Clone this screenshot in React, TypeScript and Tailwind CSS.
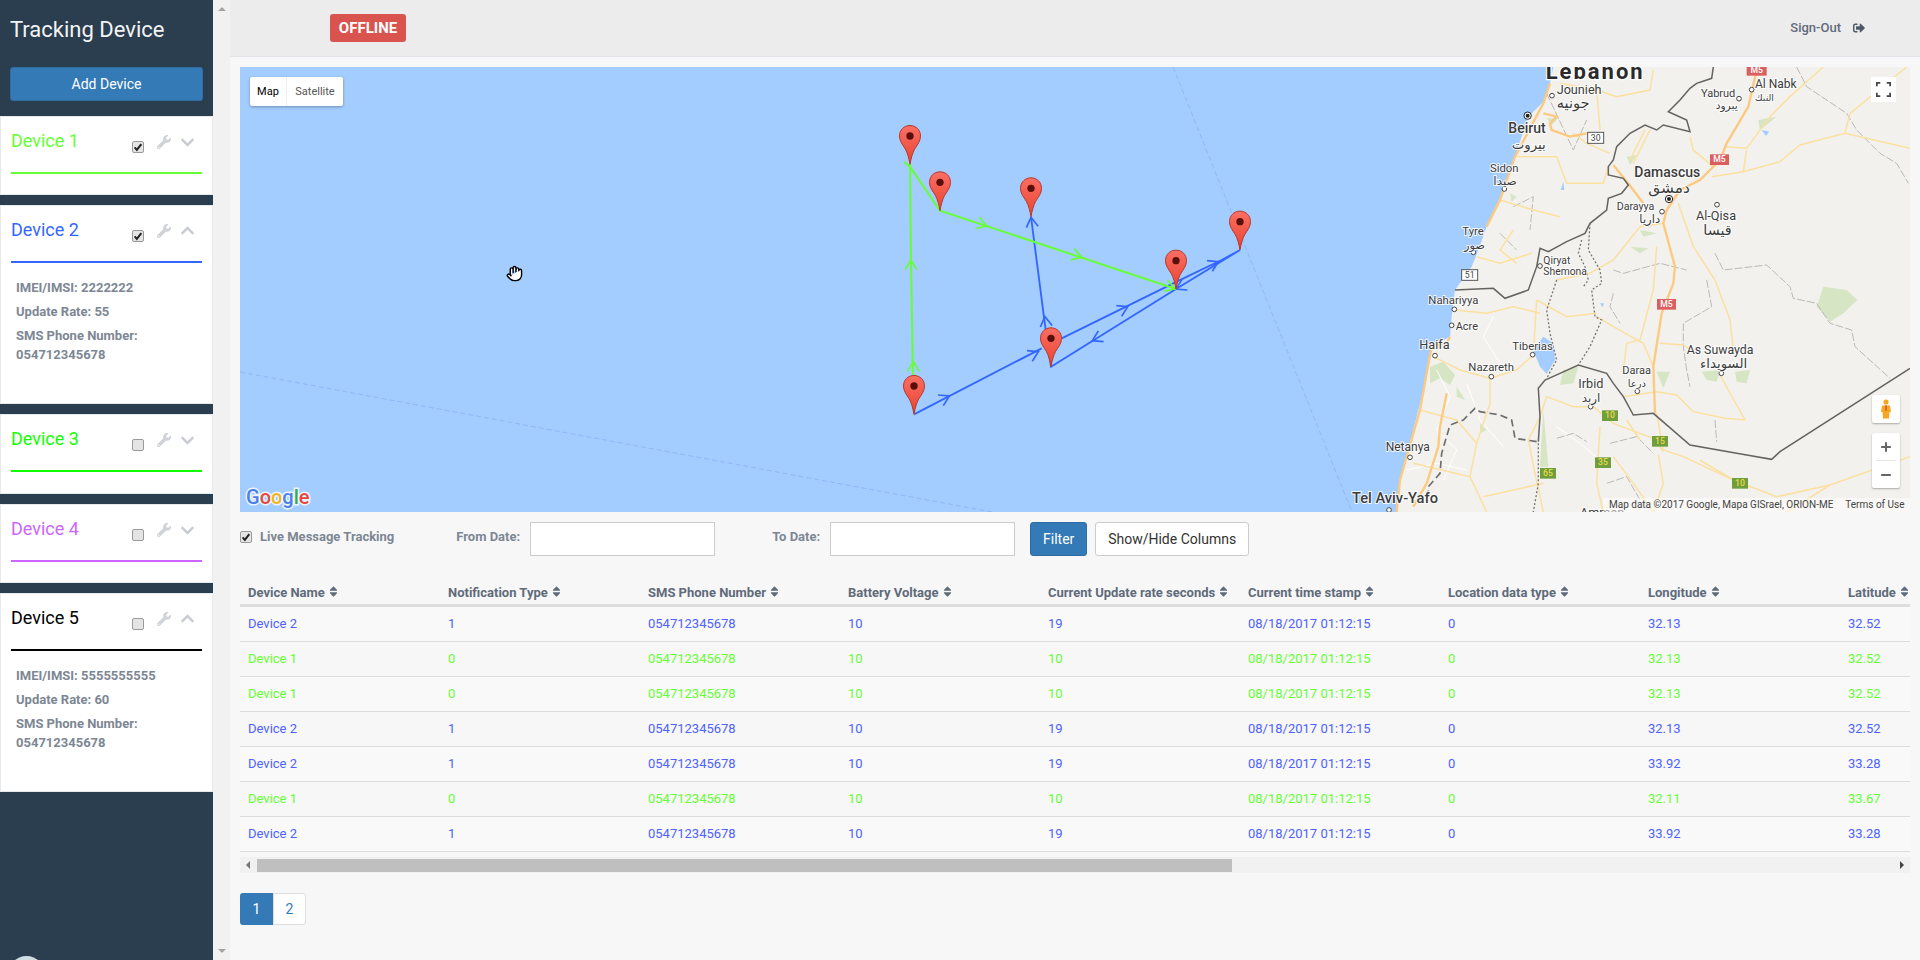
import { Hand, Minus, Plus } from 'lucide-react';
import { FaChevronDown, FaChevronUp, FaSignOutAlt, FaSort, FaWrench } from 'react-icons/fa';

const BLUE = '#3366ff';
const GREEN = '#66ff33';

type Device = { name: string; color: string; checked: boolean; imei?: string; rate?: number };

const devices: Device[] = [
  { name: 'Device 1', color: GREEN, checked: true },
  { name: 'Device 2', color: BLUE, checked: true, imei: '2222222', rate: 55 },
  { name: 'Device 3', color: '#11ff00', checked: false },
  { name: 'Device 4', color: '#cc66ff', checked: false },
  { name: 'Device 5', color: '#000000', checked: false, imei: '5555555555', rate: 60 },
];

const columns = [
  'Device Name',
  'Notification Type',
  'SMS Phone Number',
  'Battery Voltage',
  'Current Update rate seconds',
  'Current time stamp',
  'Location data type',
  'Longitude',
  'Latitude',
];

const rows = [
  ['Device 2', '1', '10', '19', '32.13', '32.52'],
  ['Device 1', '0', '10', '10', '32.13', '32.52'],
  ['Device 1', '0', '10', '10', '32.13', '32.52'],
  ['Device 2', '1', '10', '19', '32.13', '32.52'],
  ['Device 2', '1', '10', '19', '33.92', '33.28'],
  ['Device 1', '0', '10', '10', '32.11', '33.67'],
  ['Device 2', '1', '10', '19', '33.92', '33.28'],
];

const highways = [
  'M1070 60 L1045 170 L980 280 L960 330 L900 390 L840 420 L800 480 L790 520 L825 650 L820 700 L785 790 L760 950 L765 1090',
  'M450 100 L430 160 L345 320 L300 450 L260 530',
  'M640 345 L700 420 L730 460',
  'M430 190 L470 200 L450 220 L455 240 L510 260 L560 250',
  'M95 890 L80 970 L60 1080 L40 1150 L0 1290 L-10 1386',
  'M140 1030 L120 1130 L115 1190 L80 1300 L40 1370',
  'M95 890 L140 880 L150 860',
];

const roads = [
  'M1530 295 L1335 250 L1200 285 L1140 335 L1030 365 L935 380',
  'M1335 250 L1350 190 L1520 51',
  'M1270 51 L1170 140 L1110 200 L1040 295 L975 290',
  'M590 120 L650 140 L750 120 L760 60',
  'M735 240 L690 330',
  'M870 260 L880 300 L940 350',
  'M835 460 L880 590 L945 690 L990 810 L1000 900',
  'M790 520 L720 530 L640 630 L570 670 L470 690',
  'M760 950 L730 880 L640 830 L590 800',
  'M780 880 L850 885 L880 905',
  'M770 590 L760 720 L720 870 L680 880 L670 960',
  'M960 975 L1035 1110 L975 1105 L880 1085 L830 1035 L770 1025',
  'M770 1090 L790 1200 L850 1220 L1000 1290 L1130 1340 L1290 1305 L1530 1220',
  'M580 1070 L640 1120 L760 1165 L790 1205',
  'M580 1070 L520 1070 L440 1040 L420 1100 L385 1170 L405 1270 L430 1386',
  'M600 1130 L590 1300 L610 1386',
  'M760 1386 L790 1300 L775 1215',
  'M100 920 L180 960 L270 985 L270 1060 L230 1180 L210 1280 L260 1386',
  'M270 985 L350 960 L400 915 L405 830 L410 750',
  'M165 780 L260 790 L340 770 L420 790',
  'M230 620 L300 640 L395 610',
  'M350 320 L470 320 L500 400 L610 400 L625 350',
  'M300 450 L400 480 L480 500',
  'M630 310 L560 280 L520 250',
  'M480 100 L590 120 L600 240',
  'M750 240 L700 340',
  'M670 1040 L770 1025',
  'M60 1080 L170 1110 L230 1180',
  'M40 1240 L210 1280',
  'M250 1340 L430 1300',
  'M900 1230 L1000 1290',
  'M1160 1386 L1290 1305',
  'M1040 300 L1030 365',
  'M340 540 L300 600 L350 640',
  'M410 750 L500 800 L590 790',
  'M640 1220 L700 1300 L760 1386',
  'M680 1110 L720 1170',
];

const streets = [
  'M110 960 L150 1040 L110 1140 L170 1200 L130 1290',
  'M20 1260 L110 1240 L200 1260',
  'M200 1000 L240 1110 L310 1190',
  'M280 800 L250 860 L300 940',
  'M470 1130 L540 1180 L600 1230',
];

const grayLines = [
  'M1190 51 L1220 110 L1340 190 L1370 240 L1440 310 L1490 340 L1525 400',
  'M945 610 L970 660 L1100 645 L1170 710 L1180 745 L1250 760 L1290 820 L1355 840 L1365 890 L1470 985',
  'M920 690 L935 770 L850 820 L850 890 L860 960 L870 1010',
  'M640 660 L670 670 L780 640 L860 660',
  'M440 130 L520 300 L560 210',
  'M340 470 L400 440 L390 540',
  'M300 550 L350 600',
  'M640 730 L630 770 L660 820',
  'M470 1165 L520 1150 L560 1175',
  'M630 1180 L710 1160 L760 1210',
  'M620 1300 L680 1280 L720 1350',
  'M945 1110 L950 1175',
];

const greens = [
  'M90 950 L130 935 L165 975 L150 1005 L120 985 L90 1000 Z',
  'M1270 710 L1340 720 L1372 750 L1330 790 L1290 815 L1250 770 Z',
  'M1005 965 L1050 960 L1040 1000 L1010 995 Z',
  'M905 965 L960 960 L950 995 L920 990 Z',
  'M690 590 L745 595 L720 610 Z',
  'M770 965 L810 965 L790 1015 Z',
  'M720 540 L770 550 L730 560 Z',
  'M490 960 L535 950 L520 1000 L480 1005 Z',
  'M170 1010 L195 1050 L170 1040 Z',
  'M1075 210 L1130 200 L1080 240 Z',
  'M440 205 L475 205 L455 225 Z',
  'M240 1120 L260 1140 L240 1150 Z',
  'M430 1080 L445 1250 L420 1250 Z',
  'M680 320 L710 315 L690 345 Z',
  'M330 430 L350 440 L335 455 Z',
];

const waters = [
  'M430 860 L460 880 L465 930 L440 972 L420 950 L400 900 Z',
  'M1085 240 L1108 245 L1098 258 Z',
  'M490 395 L493 420 L482 420 Z',
  'M600 760 L612 760 L608 772 Z',
];

const borderLines = [
  'M940 51 L935 85 L890 100 L870 115 L840 150 L805 185 L860 210 L870 245 L790 225 L770 240 L735 225 L690 250 L650 290 L640 330 L625 350 L625 375 L670 385 L685 405 L665 430 L625 445 L620 480 L570 520 L555 550 L500 575 L445 605 L420 595 L410 650 L385 720 L315 745 L280 715 L165 720',
  'M415 1175 L420 1100 L415 1015 L435 990 L480 970 L535 945 L620 970 L640 1000 L670 1040 L700 1095 L760 1090 L870 1185 L1040 1215 L1115 1228 L1140 1205 L1530 955',
];

const dotted = [
  'M570 520 L565 600 L600 660 L605 700 L575 720 L585 800 L605 810 L570 890 L535 945',
  'M545 570 L535 610 L555 650 L565 690 L550 710',
  'M470 690 L440 780 L450 850 L470 930 L440 985',
  'M415 1180 L415 1300 L400 1386',
];

const shields: [number, number, number, number, string, string, string][] = [
  [1040, 40, 60, 37, '#dc5f5f', '#ffffff', 'M5'],
  [930, 313, 57, 32, '#dc5f5f', '#ffffff', 'M5'],
  [771, 747, 57, 32, '#dc5f5f', '#ffffff', 'M5'],
  [606, 1081, 48, 32, '#6f9e3d', '#e8d84a', '10'],
  [756, 1158, 48, 32, '#6f9e3d', '#e8d84a', '15'],
  [585, 1222, 48, 32, '#6f9e3d', '#e8d84a', '35'],
  [420, 1254, 48, 32, '#6f9e3d', '#e8d84a', '65'],
  [996, 1284, 48, 32, '#6f9e3d', '#e8d84a', '10'],
];

const labels: [string, number, number, number, number?][] = [
  ['Jounieh', 470, 132, 38],
  ['جونيه', 470, 174, 44],
  ['Beirut', 325, 250, 42, 500],
  ['بيروت', 335, 298, 40],
  ['Sidon', 270, 366, 34],
  ['صيدا', 280, 404, 36],
  ['Tyre', 187, 556, 34],
  ['صور', 192, 596, 34],
  ['Qiryat', 430, 642, 31],
  ['Shemona', 430, 674, 31],
  ['Nahariyya', 85, 762, 34],
  ['Acre', 167, 840, 33],
  ['Haifa', 58, 898, 38],
  ['Tiberias', 337, 900, 34],
  ['Nazareth', 205, 962, 34],
  ['Netanya', -43, 1204, 36],
  ['Irbid', 535, 1013, 38],
  ['اربد', 545, 1056, 36],
  ['Daraa', 667, 972, 33],
  ['درعا', 683, 1010, 30],
  ['As Suwayda', 860, 913, 37],
  ['السويداء', 900, 954, 40],
  ['Al-Qisa', 888, 511, 38],
  ['قيسا', 910, 554, 43],
  ['Damascus', 703, 381, 42, 500],
  ['دمشق', 745, 428, 46],
  ['Darayya', 650, 480, 32],
  ['داريا', 718, 518, 35],
  ['Yabrud', 903, 140, 33],
  ['يبرود', 947, 178, 32],
  ['Al Nabk', 1065, 114, 36],
  ['النبك', 1065, 152, 28],
  ['Tel Aviv-Yafo', -144, 1360, 44, 500],
  ['Amman', 540, 1402, 38],
];

const towns: [number, number][] = [
  [456, 137], [313, 417], [220, 607], [420, 648], [163, 778], [155, 826], [105, 917], [398, 914],
  [274, 980], [30, 1222], [572, 1070], [712, 1024], [786, 485], [951, 464], [964, 970], [1017, 146], [1055, 119], [-33, 1380],
];

// tip of each pin, in the overlay's own coordinates
const pins: [number, number][] = [
  [150, 193], [240, 332], [513, 350], [948, 567], [1140, 450], [573, 800], [162, 943],
];

const blueLines = [
  'M162 943 L545 745 M605 715 L920 560 L950 545 L1085 480 L1140 450 L948 567 L573 800 L553 660 L513 350',
];
const greenLines = ['M162 943 L158 780 L153 480 L150 190 M132 186 L150 200 L240 332 L948 567'];

const blueArrows: [number, number, number, number][] = [
  [268, 888, 2, -1], [535, 755, 2, -1], [803, 620, 2, -1], [1075, 485, 2, -1], [948, 567, -2, 1], [697, 722, -2, 1],
  [555, 650, -0.13, -1], [513, 352, -0.13, -1],
];
const greenArrows: [number, number, number, number][] = [
  [160, 785, 0, -1], [153, 480, 0, -1], [380, 378, 3, 1], [665, 472, 3, 1], [945, 566, 3, 1],
];

function Chevron({ x, y, dx, dy, color }: { x: number; y: number; dx: number; dy: number; color: string }) {
  const angle = Math.atan2(dy, dx);
  const a1 = angle + Math.PI - 0.55;
  const a2 = angle + Math.PI + 0.55;
  const len = 34;
  return (
    <path
      d={`M${x + Math.cos(a1) * len} ${y + Math.sin(a1) * len} L${x} ${y} L${x + Math.cos(a2) * len} ${y + Math.sin(a2) * len}`}
      fill="none"
      stroke={color}
      strokeWidth="5"
    />
  );
}

function CheckBox({ checked, className }: { checked: boolean; className: string }) {
  return (
    <span
      className={`flex h-[12px] w-[12px] shrink-0 items-center justify-center rounded-[2px] border border-[#9a9a9a] bg-[#e4e4e4] ${className}`}
    >
      {checked && (
        <svg viewBox="0 0 12 12" className="h-[10px] w-[10px]">
          <path d="M2 6.5 L4.6 9.5 L10 2.5" fill="none" stroke="#222" strokeWidth="2.4" />
        </svg>
      )}
    </span>
  );
}

function DeviceCard({ device }: { device: Device }) {
  return (
    <div className="border border-[#e7eaec] bg-white px-[10px]">
      <div className="relative h-[57px] border-b-2" style={{ borderColor: device.color }}>
        <div className="pt-[11px] text-[18px] leading-[26px]" style={{ color: device.color }}>
          {device.name}
        </div>
        <CheckBox checked={device.checked} className="absolute left-[121px] top-[24px]" />
        <FaWrench className="absolute left-[146px] top-[18px] text-[14px] text-[#cfd2d6]" />
        {device.imei ? (
          <FaChevronUp className="absolute left-[169px] top-[17px] text-[15px] text-[#c8ccd1]" />
        ) : (
          <FaChevronDown className="absolute left-[169px] top-[18px] text-[15px] text-[#c8ccd1]" />
        )}
      </div>
      {device.imei ? (
        <div className="h-[140px] px-[5px] pt-[15px] text-[13px] font-bold leading-[19px] text-[#7d8794]">
          <p className="mb-[5px]">IMEI/IMSI: {device.imei}</p>
          <p className="mb-[5px]">Update Rate: {device.rate}</p>
          <p>SMS Phone Number:</p>
          <p>054712345678</p>
        </div>
      ) : (
        <div className="h-[20.4px]" />
      )}
    </div>
  );
}

function MapCanvas() {
  return (
    <svg viewBox="240 67 1670 445" className="absolute inset-0 h-full w-full">
      <defs>
        <linearGradient id="pinFill" x1="0" y1="0" x2="0" y2="1">
          <stop offset="0" stopColor="#fb6f64" />
          <stop offset="1" stopColor="#e8432f" />
        </linearGradient>
      </defs>
      <path d="M240 372 L992 512" stroke="#8fb8f7" strokeWidth="1" strokeDasharray="5 3" fill="none" />
      <path d="M1173 67 L1352 512" stroke="#8fb8f7" strokeWidth="1" strokeDasharray="5 3" fill="none" />
      <g transform="translate(1400 50) scale(0.33333)">
        <path
          d="M1530 51 L460 51 L450 100 L430 155 L385 200 L345 320 L310 420 L260 530 L235 600 L215 650 L165 720 L155 800 L150 860 L95 890 L70 1020 L40 1140 L0 1290 L-10 1386 L1530 1386 Z"
          fill="#f2f1ed"
        />
        {greens.map((d) => (
          <path key={d} d={d} fill="#d6e6c4" />
        ))}
        {streets.map((d) => (
          <path key={d} d={d} fill="none" stroke="#ffffff" strokeWidth="3" />
        ))}
        {grayLines.map((d) => (
          <path key={d} d={d} fill="none" stroke="#b9b9b6" strokeWidth="3" strokeDasharray="24 6" />
        ))}
        {roads.map((d) => (
          <path key={d} d={d} fill="none" stroke="#fbe0a0" strokeWidth="4.5" />
        ))}
        {waters.map((d) => (
          <path key={d} d={d} fill="#a3ccff" />
        ))}
        {highways.map((d) => (
          <path key={d} d={d} fill="none" stroke="#fcc97f" strokeWidth="7" />
        ))}
        {borderLines.map((d) => (
          <path key={d} d={d} fill="none" stroke="#64635f" strokeWidth="4.5" />
        ))}
        {dotted.map((d) => (
          <path key={d} d={d} fill="none" stroke="#777" strokeWidth="4" strokeDasharray="6 6" />
        ))}
        <path
          d="M410 1175 L345 1165 L335 1110 L300 1095 L240 1085 L225 1075 L190 1110 L150 1125 L125 1210 L120 1270 L85 1310 L85 1340"
          fill="none"
          stroke="#6e6e6e"
          strokeWidth="5"
          strokeDasharray="22 12"
        />
        {shields.map(([x, y, w, h, bg, fg, t], i) => (
          <g key={i}>
            <rect x={x} y={y} width={w} height={h} fill={bg} />
            <text x={x + w / 2} y={y + h - 8} fontSize="26" fontWeight="500" textAnchor="middle" fill={fg}>
              {t}
            </text>
          </g>
        ))}
        <rect x="563" y="247" width="48" height="33" fill="#fff" stroke="#555" strokeWidth="3" />
        <text x="587" y="273" fontSize="26" textAnchor="middle" fill="#444">30</text>
        <rect x="185" y="659" width="48" height="32" fill="#fff" stroke="#555" strokeWidth="3" />
        <text x="209" y="685" fontSize="26" textAnchor="middle" fill="#444">51</text>
        {towns.map(([x, y]) => (
          <circle key={`${x}-${y}`} cx={x} cy={y} r="7" fill="#fff" stroke="#444" strokeWidth="3" />
        ))}
        <circle cx="383" cy="197" r="11" fill="#fff" stroke="#222" strokeWidth="3" />
        <circle cx="383" cy="197" r="6" fill="#222" />
        <circle cx="807" cy="447" r="11" fill="#fff" stroke="#222" strokeWidth="3" />
        <circle cx="807" cy="447" r="6" fill="#222" />
        <text
          x="437"
          y="88"
          fontSize="66"
          fontWeight="700"
          letterSpacing="6"
          fill="#2a2a2a"
          stroke="#fff"
          strokeWidth="7"
          paintOrder="stroke"
        >
          Lebanon
        </text>
        {labels.map(([t, x, y, size, weight]) => (
          <text
            key={t}
            x={x}
            y={y}
            fontSize={size}
            fontWeight={weight ?? 400}
            fill="#3c3c3c"
            stroke="#fff"
            strokeWidth="6"
            strokeOpacity="0.85"
            paintOrder="stroke"
          >
            {t}
          </text>
        ))}
      </g>
      <g transform="translate(860 100) scale(0.33333)">
        {blueLines.map((d) => (
          <path key={d} d={d} fill="none" stroke={BLUE} strokeWidth="5.5" />
        ))}
        {blueArrows.map(([x, y, dx, dy]) => (
          <Chevron key={`${x}-${y}`} x={x} y={y} dx={dx} dy={dy} color={BLUE} />
        ))}
        {greenLines.map((d) => (
          <path key={d} d={d} fill="none" stroke={GREEN} strokeWidth="6" />
        ))}
        {greenArrows.map(([x, y, dx, dy]) => (
          <Chevron key={`${x}-${y}`} x={x} y={y} dx={dx} dy={dy} color={GREEN} />
        ))}
        {pins.map(([x, y]) => (
          <g key={x} transform={`translate(${x - 33} ${y - 118})`}>
            <path
              d="M33 1.5 C15 1.5 1.5 15 1.5 33 C1.5 49 11 59 19 72 C25 83 30 100 33 118 C36 100 41 83 47 72 C55 59 64.5 49 64.5 33 C64.5 15 51 1.5 33 1.5 Z"
              fill="url(#pinFill)"
              stroke="#b9372b"
              strokeWidth="3"
            />
            <circle cx="33" cy="33" r="11" fill="#5b0f0b" />
          </g>
        ))}
      </g>
      <text x="246" y="504" fontSize="20" fontWeight="500" stroke="#fff" strokeWidth="3" strokeOpacity="0.8" paintOrder="stroke">
        <tspan fill="#4a80e8">G</tspan>
        <tspan fill="#e5483b">o</tspan>
        <tspan fill="#f3b61a">o</tspan>
        <tspan fill="#4a80e8">g</tspan>
        <tspan fill="#38a853">l</tspan>
        <tspan fill="#e5483b">e</tspan>
      </text>
    </svg>
  );
}

function MapPanel() {
  return (
    <div className="relative h-[445px] overflow-hidden bg-[#a3ccff]">
      <MapCanvas />
      <div className="absolute left-[10px] top-[10px] flex h-[29px] rounded-[2px] bg-white text-[11px] leading-[29px] shadow-[0_1px_3px_rgba(0,0,0,0.3)]">
        <div className="w-[37px] border-r border-[#eee] text-center text-black">Map</div>
        <div className="w-[56px] text-center text-[#565656]">Satellite</div>
      </div>
      <div className="absolute left-[1631px] top-[10px] flex h-[25px] w-[25px] items-center justify-center bg-white">
        <svg viewBox="0 0 14 14" className="h-[15px] w-[15px]">
          <path d="M0.8 4 V0.8 H4 M10 0.8 H13.2 V4 M13.2 10 V13.2 H10 M4 13.2 H0.8 V10" fill="none" stroke="#444" strokeWidth="1.6" />
        </svg>
      </div>
      <div className="absolute left-[1632px] top-[328px] flex h-[28px] w-[28px] items-center justify-center rounded-[2px] bg-white shadow-[0_1px_2px_rgba(0,0,0,0.3)]">
        <svg viewBox="0 0 12 20" className="h-[20px] w-[12px]">
          <circle cx="6" cy="3" r="2.6" fill="#f5a623" />
          <path d="M2 6.5 H10 L11 13 H9.5 L9 19.5 H3 L2.5 13 H1 Z" fill="#f5a623" />
          <path d="M5 6.5 H7 L6.6 12 H5.4 Z" fill="#d8562b" />
        </svg>
      </div>
      <div className="absolute left-[1632px] top-[366px] flex h-[55px] w-[28px] flex-col items-center rounded-[2px] bg-white text-[#666] shadow-[0_1px_2px_rgba(0,0,0,0.3)]">
        <div className="flex h-[27px] items-center">
          <Plus size={14} strokeWidth={3.5} />
        </div>
        <div className="h-px w-[20px] bg-[#e6e6e6]" />
        <div className="flex h-[27px] items-center">
          <Minus size={14} strokeWidth={3.5} />
        </div>
      </div>
      <div className="absolute bottom-0 right-0 flex h-[14px] w-[307px] items-center bg-white/50 pl-[6px] text-[10px] leading-[14px] text-[#444]">
        <span>Map data ©2017 Google, Mapa GISrael, ORION-ME</span>
        <span className="ml-[12px]">Terms of Use</span>
      </div>
      <Hand
        size={17}
        fill="#fff"
        strokeWidth={2}
        className="absolute left-[266px] top-[198px] text-black"
      />
    </div>
  );
}

function FilterBar() {
  return (
    <div className="flex h-[34px] mt-[10px] items-start text-[13px] leading-[19px]">
      <CheckBox checked className="mt-[9px]" />
      <span className="ml-[8px] mt-[5px] font-bold text-[#7d8794]">Live Message Tracking</span>
      <span className="ml-[62px] mt-[5px] font-bold text-[#7d8794]">From Date:</span>
      <input className="ml-[10px] h-[34px] w-[185px] border border-[#ccc] bg-white" />
      <span className="ml-[57px] mt-[5px] font-bold text-[#7d8794]">To Date:</span>
      <input className="ml-[10px] h-[34px] w-[185px] border border-[#ccc] bg-white" />
      <button className="ml-[15px] h-[34px] w-[57px] rounded-[3px] border border-[#2e6da4] bg-[#337ab7] text-[14px] text-white">
        Filter
      </button>
      <button className="ml-[8px] h-[34px] w-[154px] rounded-[3px] border border-[#ccc] bg-white text-[14px] text-[#333]">
        Show/Hide Columns
      </button>
    </div>
  );
}

function DataTable() {
  return (
    <div className="mt-[24px] overflow-hidden">
      <table className="w-[1800px] table-fixed border-separate border-spacing-0 text-[13px] leading-[19px]">
        <thead>
          <tr>
            {columns.map((c) => (
              <th
                key={c}
                className="w-[200px] whitespace-nowrap border-b-[3px] border-[#ddd] pb-[2px] pl-[8px] pt-[3px] text-left font-bold text-[#5f6b7a]"
              >
                {c}
                <FaSort className="ml-[2px] inline-block align-[-1px] text-[13px] text-[#5f6b7a]" />
              </th>
            ))}
          </tr>
        </thead>
        <tbody>
          {rows.map((r, i) => {
            const color = r[0] === 'Device 1' ? GREEN : '#4d62ff';
            const cells = [r[0], r[1], '054712345678', r[2], r[3], '08/18/2017 01:12:15', '0', r[4], r[5]];
            return (
              <tr key={i} className={i % 2 === 0 ? 'bg-[#f9f9f9]' : ''}>
                {cells.map((c, j) => (
                  <td
                    key={j}
                    className="whitespace-nowrap border-b border-[#ddd] pb-[8px] pl-[8px] pt-[7px]"
                    style={{ color }}
                  >
                    {c}
                  </td>
                ))}
              </tr>
            );
          })}
        </tbody>
      </table>
      <div className="mt-[5px] flex h-[16px] items-center bg-[#f1f1f1]">
        <span className="ml-[6px] h-0 w-0 border-y-[4px] border-r-[4px] border-y-transparent border-r-[#777]" />
        <div className="ml-[7px] h-[13px] w-[975px] bg-[#bfbfbf]" />
        <span className="ml-auto mr-[6px] h-0 w-0 border-y-[4px] border-l-[4px] border-y-transparent border-l-[#444]" />
      </div>
    </div>
  );
}

export default function App() {
  return (
    <div className="flex h-[960px] w-[1920px] overflow-hidden bg-[#f7f7f7] font-[Roboto,'DejaVu_Sans',sans-serif]">
      <aside className="w-[213px] shrink-0 overflow-hidden bg-[#2b3e50]">
        <h1 className="pl-[10px] pt-[15px] text-[22px] leading-[30px] text-[#f3f3f4]">Tracking Device</h1>
        <button className="mx-[10px] mt-[22px] block h-[34px] w-[193px] rounded-[3px] border border-[#2e6da4] bg-[#337ab7] text-[14px] text-white">
          Add Device
        </button>
        <div className="mt-[15px] flex flex-col gap-[10px]">
          {devices.map((d) => (
            <DeviceCard key={d.name} device={d} />
          ))}
        </div>
        <div className="ml-[8px] mt-[164px] h-[37px] w-[37px] rounded-full bg-[#cfdde3]" />
      </aside>
      <div className="flex w-[17px] shrink-0 flex-col items-center justify-between bg-[#f1f1f1] py-[7px]">
        <span className="h-0 w-0 border-x-[4px] border-b-[4px] border-x-transparent border-b-[#a3a3a3]" />
        <span className="h-0 w-0 border-x-[4px] border-t-[4px] border-x-transparent border-t-[#a3a3a3]" />
      </div>
      <main className="min-w-0 flex-1">
        <header className="relative flex h-[57px] items-center border-b border-[#e1e4e8] bg-[#ececec]">
          <span className="ml-[100px] flex h-[28px] w-[76px] items-center justify-center rounded-[3px] bg-[#d9534f] text-[15px] font-bold text-white">
            OFFLINE
          </span>
          <span className="ml-auto text-[13px] font-medium text-[#5f6b7a]">Sign-Out</span>
          <FaSignOutAlt className="ml-[12px] mr-[55px] text-[12px] text-[#4f5a68]" />
        </header>
        <div className="px-[10px] pt-[10px]">
          <MapPanel />
          <FilterBar />
          <DataTable />
          <div className="mt-[20px] flex h-[32px] text-[14px]">
            <span className="flex w-[33px] items-center justify-center rounded-l-[3px] bg-[#337ab7] text-white">1</span>
            <span className="flex w-[33px] items-center justify-center rounded-r-[3px] border border-[#ddd] bg-white text-[#337ab7]">2</span>
          </div>
        </div>
      </main>
    </div>
  );
}
